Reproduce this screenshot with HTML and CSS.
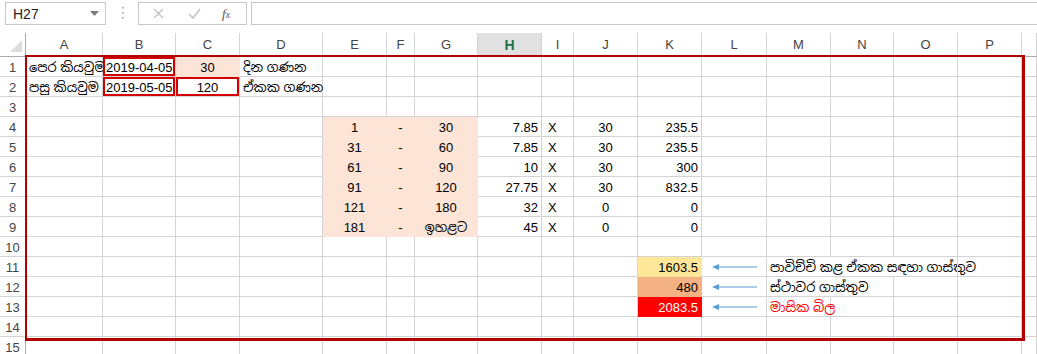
FILE: index.html
```html
<!DOCTYPE html>
<html lang="si">
<head>
  <meta charset="UTF-8">
  <title>විදුලි බිල</title>
  <link rel="stylesheet" href="styles.css">
</head>
<body>
  <div class="topbar">
    <div class="namebox">
      <span>H27</span>
      <svg width="9" height="5" viewBox="0 0 9 5"><polygon points="0,0 9,0 4.5,5" fill="#7a7a7a"/></svg>
    </div>
    <div class="dots">
      <svg width="3" height="13" viewBox="0 0 3 13"><rect x="1" y="0" width="1.5" height="1.5" fill="#9a9a9a"/><rect x="1" y="5" width="1.5" height="1.5" fill="#9a9a9a"/><rect x="1" y="10" width="1.5" height="1.5" fill="#9a9a9a"/></svg>
    </div>
    <div class="fx-tools">
      <svg class="tool-x" width="11" height="11" viewBox="0 0 11 11"><path d="M1 1 L10 10 M10 1 L1 10" stroke="#c3c3c3" stroke-width="1.4" fill="none"/></svg>
      <svg class="tool-ok" width="13" height="11" viewBox="0 0 13 11"><path d="M1 6 L5 10 L12 1" stroke="#c3c3c3" stroke-width="1.6" fill="none"/></svg>
      <span class="tool-fx">f<small>x</small></span>
    </div>
    <div class="fx-input"></div>
  </div>

  <div class="sheet" id="sheet">
    <div class="frame"></div>
  </div>

  <script>
    const colunas = ['A','B','C','D','E','F','G','H','I','J','K','L','M','N','O','P',''];

    const seta = '<svg width="64" height="19" viewBox="0 0 64 19"><path d="M12 10 L55 10" stroke="#5b9bd5" stroke-width="1.2"/><polygon points="10,10 17,7 17,13" fill="#5b9bd5"/></svg>';

    const dados = {
      A1: { v: 'පෙර කියවුම', c: 'l' },
      B1: { v: '2019-04-05', c: 'c boxed' },
      C1: { v: '30', c: 'c peach' },
      D1: { v: 'දින ගණන', c: 'l' },
      A2: { v: 'පසු කියවුම', c: 'l' },
      B2: { v: '2019-05-05', c: 'c boxed' },
      C2: { v: '120', c: 'c boxed' },
      D2: { v: 'ඒකක ගණන', c: 'l' },
      K11: { v: '1603.5', c: 'r yellow' },
      K12: { v: '480', c: 'r orange' },
      K13: { v: '2083.5', c: 'r red' },
      L11: { v: seta, c: 'arrow' },
      L12: { v: seta, c: 'arrow' },
      L13: { v: seta, c: 'arrow' },
      M11: { v: 'පාවිච්චි කළ ඒකක සඳහා ගාස්තුව', c: 'l spill' },
      N11: { v: '', c: 'spill' },
      M12: { v: 'ස්ථාවර ගාස්තුව', c: 'l spill' },
      M13: { v: 'මාසික බිල', c: 'l redtext' }
    };

    const tarifas = [
      [1, 30, 7.85, 30, 235.5],
      [31, 60, 7.85, 30, 235.5],
      [61, 90, 10, 30, 300],
      [91, 120, 27.75, 30, 832.5],
      [121, 180, 32, 0, 0],
      [181, 'ඉහළට', 45, 0, 0]
    ];

    tarifas.forEach((t, i) => {
      const r = i + 4;
      dados['E' + r] = { v: t[0], c: 'c peach' };
      dados['F' + r] = { v: '-', c: 'c peach' };
      dados['G' + r] = { v: t[1], c: 'c peach' };
      dados['H' + r] = { v: t[2], c: 'r' };
      dados['I' + r] = { v: 'X', c: 'l x' };
      dados['J' + r] = { v: t[3], c: 'c' };
      dados['K' + r] = { v: t[4], c: 'r' };
    });

    const sheet = document.getElementById('sheet');

    function celula(classe, html) {
      const d = document.createElement('div');
      d.className = classe;
      d.innerHTML = html;
      sheet.appendChild(d);
    }

    window.onload = () => {
      celula('corner', '<svg width="12" height="12" viewBox="0 0 12 12"><polygon points="12,0 12,12 0,12" fill="#dcdcdc"/></svg>');
      colunas.forEach(c => celula('colhead' + (c === 'H' ? ' active' : ''), c));

      for (let r = 1; r <= 15; r++) {
        celula('rowhead', r);
        colunas.forEach(c => {
          const d = dados[c + r];
          celula('cell' + (d ? ' ' + d.c : ''), d ? d.v : '');
        });
      }
    };
  </script>
</body>
</html>
```

FILE: styles.css
```css
body {
  margin: 0;
  background-color: #ffffff;
  font-family: "Liberation Sans", Arial, "Noto Sans Sinhala", "Iskoola Pota", sans-serif;
  overflow: hidden;
}
.topbar {
  display: flex;
  align-items: flex-start;
  height: 33px;
  padding: 2px 0 0 5px;
  box-sizing: border-box;
}
.namebox {
  width: 101px;
  height: 23px;
  border: 1px solid #c6c6c6;
  box-sizing: border-box;
  display: flex;
  align-items: center;
  justify-content: space-between;
  padding: 0 6px 0 7px;
  font-size: 14px;
  color: #222;
}
.dots {
  width: 32px;
  height: 23px;
  display: flex;
  align-items: center;
  justify-content: center;
}
.fx-tools {
  width: 109px;
  height: 23px;
  border: 1px solid #c6c6c6;
  box-sizing: border-box;
  display: flex;
  align-items: center;
}
.tool-x {
  margin-left: 14px;
}
.tool-ok {
  margin-left: 24px;
}
.tool-fx {
  margin-left: 21px;
  font-family: "Liberation Serif", serif;
  font-style: italic;
  font-size: 13px;
  color: #555;
}
.tool-fx small {
  font-size: 10px;
}
.fx-input {
  flex: 1;
  height: 23px;
  margin-left: 4px;
  border: 1px solid #c6c6c6;
  border-right: none;
  box-sizing: border-box;
}
.sheet {
  position: relative;
  display: grid;
  grid-template-columns: 26px 77px 73px 64px 83px 64px 28px 63px 64px 32px 64px 64px 65px 64px 63px 64px 64px 15px;
  grid-template-rows: 24px;
  grid-auto-rows: 20px;
}
.corner, .colhead, .rowhead, .cell {
  box-sizing: border-box;
  border-right: 1px solid #d4d4d4;
  border-bottom: 1px solid #d4d4d4;
  white-space: nowrap;
}
.corner {
  display: flex;
  align-items: flex-end;
  justify-content: flex-end;
  padding: 0 3px 4px 0;
  border-bottom-color: #ababab;
  border-right-color: #ababab;
}
.colhead {
  text-align: center;
  font-size: 13px;
  line-height: 24px;
  color: #444;
  border-bottom-color: #ababab;
}
.colhead.active {
  background-color: #e1e1e1;
  color: #217346;
  font-weight: bold;
  font-size: 14px;
  border-bottom: 2px solid #217346;
}
.rowhead {
  text-align: center;
  font-size: 13px;
  line-height: 22px;
  color: #444;
  border-right-color: #ababab;
}
.cell {
  font-size: 13px;
  line-height: 22px;
  padding: 0 3px;
  color: #000;
}
.l { text-align: left; }
.c { text-align: center; }
.r { text-align: right; }
.x {
  padding-left: 6px;
}
.peach {
  background-color: #fce4d6;
  border-color: #fce4d6;
}
.yellow {
  background-color: #ffe699;
  border-color: #ffe699;
}
.orange {
  background-color: #f4b183;
  border-color: #f4b183;
}
.red {
  background-color: #ff0000;
  border-color: #ff0000;
  color: #ffffff;
}
.redtext {
  color: #ff0000;
}
.boxed {
  box-shadow: inset 0 0 0 2px #d40000;
}
.spill {
  border-right-color: transparent;
}
.arrow {
  padding: 0;
  line-height: 0;
}
.frame {
  position: absolute;
  left: 25px;
  top: 22px;
  width: 1000px;
  height: 286px;
  box-sizing: border-box;
  border: 2px solid #b20000;
  border-right-width: 3px;
  border-bottom-width: 3px;
  pointer-events: none;
  z-index: 2;
}
```
